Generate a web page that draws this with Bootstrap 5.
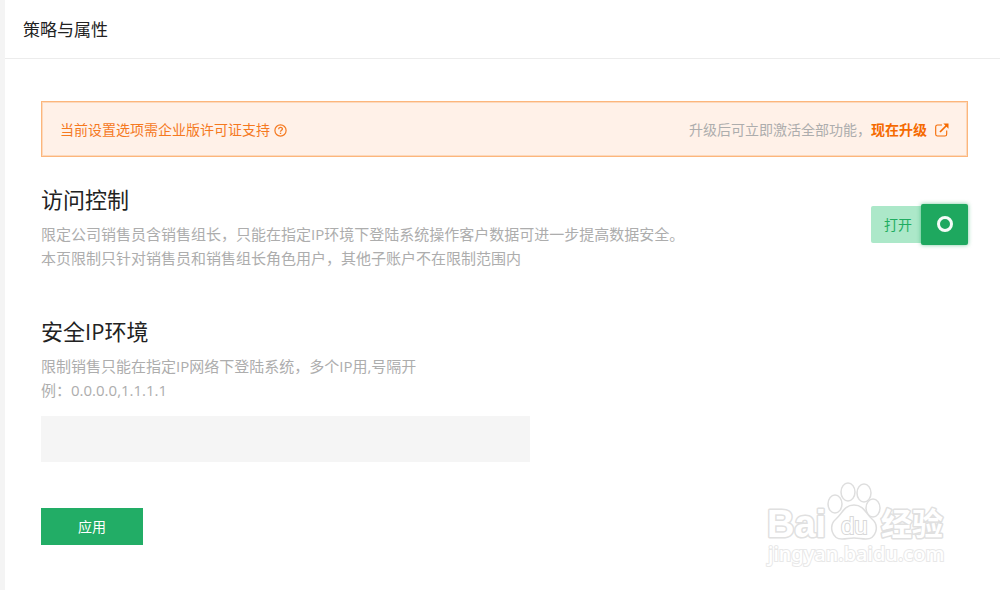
<!DOCTYPE html>
<html lang="zh-CN">
<head>
<meta charset="utf-8">
<meta name="viewport" content="width=device-width, initial-scale=1">
<title>策略与属性</title>
<link href="https://cdn.jsdelivr.net/npm/bootstrap@5.3.0/dist/css/bootstrap.min.css" rel="stylesheet">
<style>
  body { font-family: "Open Sans", "Noto Sans CJK SC", sans-serif; font-size: 15px; line-height: 24px; color: #222; background: #fff; }
  .page-shell { border-left: 5px solid #f4f4f4; }
  .page-head { padding: 18px 18px 16px; border-bottom: 1px solid #ececec; }
  .page-title { font-size: 17px; line-height: 24px; font-weight: 400; }
  .page-body { padding: 42px 32px 45px 36px; }
  .license-bar { min-height: 56px; padding: 2px 18px 0; border: 1px solid #fcb67c; outline: 1px solid #fdd9bc; outline-offset: -2px; background: #fff1e8; font-size: 14px; color: #f5791f; }
  .license-bar a { color: #f56a00; font-weight: 700; text-decoration: none; }
  .muted-text { color: #adadad; font-weight: 400; }
  .section-title { font-size: 22px; line-height: 30px; font-weight: 400; margin-bottom: 8px; }
  .access-block { margin-top: 27px; margin-bottom: 46px; }
  .access-switch { padding-bottom: 6px; }
  .switch-text { height: 37px; width: 50px; padding-left: 13px; background: #ace8c9; color: #1fad61; font-size: 14px; line-height: 37px; border-radius: 2px 0 0 2px; }
  .switch-knob { appearance: none; width: 47px; height: 41px; margin: 0; background: #1ea85f; border-radius: 2px; box-shadow: 0 0 4px rgba(30, 168, 95, .6); display: grid; place-items: center; }
  .switch-knob::before { content: ""; width: 16px; height: 16px; border: 3px solid #f4fbf7; border-radius: 50%; }
  .ip-field { width: 54%; max-width: 489px; min-width: 240px; height: 46px; margin-top: 14px; margin-bottom: 46px; background: #f5f5f5; border: 0; border-radius: 0; }
  .apply-btn { min-width: 102px; height: 37px; padding: 0 16px; border: 0; border-radius: 0; background: #22ad66; color: #fff; font-size: 14px; }
  .apply-btn:hover { background: #1ea85f; color: #fff; }
  .watermark { right: 48px; bottom: 18px; pointer-events: none; }
</style>
</head>
<body>
<div class="page-shell min-vh-100 position-relative">
  <header class="page-head"><h1 class="page-title m-0">策略与属性</h1></header>
  <main class="page-body">
    <div class="license-bar d-flex flex-wrap align-items-center justify-content-between">
      <div class="d-flex align-items-center gap-1">
        <span>当前设置选项需企业版许可证支持</span>
        <svg width="13" height="13" viewBox="0 0 13 13" fill="none" stroke="currentColor" aria-hidden="true"><circle cx="6.500" cy="6.500" r="5.600" stroke-width="1.200"/><path d="M4.600 5.200C4.600 2.800 8.400 2.900 8.400 5C8.400 6.300 6.500 6.200 6.500 7.700" stroke-width="1.300"/><path d="M6.500 8.700v1.300" stroke-width="1.400"/></svg>
      </div>
      <div class="d-flex align-items-center">
        <span class="muted-text">升级后可立即激活全部功能，</span>
        <a href="#" class="d-flex align-items-center gap-2">现在升级
          <svg width="14" height="14" viewBox="0 0 14 14" fill="none" stroke="currentColor" aria-hidden="true"><path d="M7 2H2.500Q.7 2 .7 3.800v7.400Q.7 13 2.500 13h7.400q1.800 0 1.800-1.800V7.500" stroke-width="1.100"/><path d="M5 9l6.500-6.500" stroke-width="1.700"/><path d="M8.300.6h5.200v5.200z" fill="currentColor" stroke="none"/></svg>
        </a>
      </div>
    </div>

    <section class="access-block d-flex align-items-center justify-content-between gap-4">
      <div>
        <h2 class="section-title">访问控制</h2>
        <p class="muted-text m-0">限定公司销售员含销售组长，只能在指定IP环境下登陆系统操作客户数据可进一步提高数据安全。<br>本页限制只针对销售员和销售组长角色用户，其他子账户不在限制范围内</p>
      </div>
      <div class="access-switch d-flex align-items-center flex-shrink-0">
        <label class="switch-text" for="accessSwitch">打开</label>
        <input class="switch-knob" type="checkbox" role="switch" id="accessSwitch" checked>
      </div>
    </section>

    <form>
      <h2 class="section-title"><label for="safeIp">安全IP环境</label></h2>
      <p class="muted-text m-0">限制销售只能在指定IP网络下登陆系统，多个IP用,号隔开<br>例：0.0.0.0,1.1.1.1</p>
      <input class="ip-field form-control" type="text" id="safeIp">
      <button type="button" class="apply-btn btn">应用</button>
    </form>
  </main>

  <svg class="watermark position-absolute" width="190" height="92" viewBox="0 0 190 92" aria-hidden="true" fill="#fff" stroke="#dedede" stroke-width="1.500">
    <g stroke="#e0e0e0" stroke-width="3" paint-order="stroke" stroke-linejoin="round" font-weight="700">
      <text x="5" y="57" font-size="38" font-family="Liberation Sans, sans-serif">Bai</text>
      <text x="119" y="55" font-size="31" font-family="Noto Sans CJK SC, sans-serif">经验</text>
    </g>
    <ellipse cx="73" cy="24" rx="7" ry="9"/><ellipse cx="86" cy="12" rx="7" ry="9"/><ellipse cx="102" cy="13" rx="7" ry="9"/><ellipse cx="111" cy="28" rx="7" ry="9"/>
    <path d="M92 25c-10 0-12 9-18 14c-8 7-4 20 6 20c5 0 7-1 12-1s7 1 12 1c10 0 14-13 6-20c-6-5-8-14-18-14z"/>
    <text x="79" y="54" font-size="24" font-family="Liberation Sans, sans-serif" stroke="#d8d8d8" stroke-width="2" paint-order="stroke">du</text>
    <text x="6" y="81" font-size="20" font-weight="500" font-family="Noto Sans, sans-serif" stroke="#e8e8e8" stroke-width="2" paint-order="stroke">jingyan.baidu.com</text>
  </svg>
</div>
<script src="https://cdn.jsdelivr.net/npm/bootstrap@5.3.0/dist/js/bootstrap.bundle.min.js"></script>
</body>
</html>
